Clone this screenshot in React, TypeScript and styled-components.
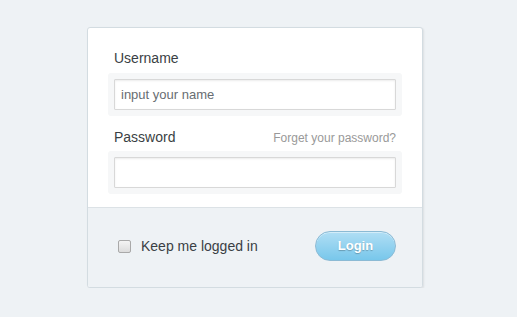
import React from 'react'
import styled, { createGlobalStyle } from 'styled-components'

const GlobalStyle = createGlobalStyle`
  html, body {
    margin: 0;
    padding: 0;
    background: #eef2f5;
    font-family: "Liberation Sans", Arial, sans-serif;
  }
`

function App() {
  return (
    <Page>
      <GlobalStyle />
      <Card>
        <Body>
          <LabelRow>
            <Label>Username</Label>
          </LabelRow>
          <InputWell>
            <Input type="text" placeholder="input your name" />
          </InputWell>
          <LabelRow $spaced>
            <Label>Password</Label>
            <Forgot href="#">Forget your password?</Forgot>
          </LabelRow>
          <InputWell>
            <Input type="password" />
          </InputWell>
        </Body>
        <Footer>
          <Remember>
            <Check type="checkbox" />
            Keep me logged in
          </Remember>
          <LoginButton>Login</LoginButton>
        </Footer>
      </Card>
    </Page>
  )
}

const Page = styled.div`
  padding: 27px 0 0 87px;
`

const Card = styled.div`
  width: 334px;
  background: #fff;
  border: 1px solid #d3dce1;
  border-radius: 3px;
  box-shadow: 1px 1px 2px rgb(0 0 0 / 8%);
  overflow: hidden;
`

const Body = styled.div`
  padding: 20px 20px 13px;
`

const LabelRow = styled.div<{ $spaced?: boolean }>`
  display: flex;
  justify-content: space-between;
  align-items: baseline;
  height: 20px;
  line-height: 20px;
  padding: 0 6px;
  margin: ${(p) => (p.$spaced ? '11px 0 4px' : '0 0 5px')};
`

const Label = styled.span`
  font-size: 14px;
  color: #3a3f44;
`

const Forgot = styled.a`
  font-size: 12px;
  color: #999;
  text-decoration: none;
`

const InputWell = styled.div`
  padding: 6px;
  background: #f6f7f8;
  border-radius: 3px;
`

const Input = styled.input`
  display: block;
  box-sizing: border-box;
  width: 100%;
  height: 31px;
  margin: 0;
  padding: 0 6px;
  border: 1px solid #d8d8d8;
  border-radius: 1px;
  background: #fff;
  box-shadow: inset 0 1px 2px rgb(0 0 0 / 8%);
  font-family: inherit;
  font-size: 13px;
  color: #333;
  outline: none;

  &::placeholder {
    color: #686d72;
  }
`

const Footer = styled.div`
  display: flex;
  align-items: center;
  justify-content: space-between;
  box-sizing: border-box;
  height: 80px;
  padding: 0 26px 4px 30px;
  background: #eef2f5;
  border-top: 1px solid #dce2e6;
`

const Remember = styled.label`
  display: flex;
  align-items: center;
  gap: 10px;
  font-size: 14px;
  color: #3a3f44;
`

const Check = styled.input`
  appearance: none;
  box-sizing: border-box;
  width: 13px;
  height: 13px;
  margin: 2px 0 0;
  border: 1px solid #a9a9a9;
  border-radius: 2px;
  background: linear-gradient(#f4f4f4, #dcdcdc);
`

const LoginButton = styled.button`
  box-sizing: border-box;
  width: 81px;
  height: 30px;
  border: 1px solid #8bbad4;
  border-radius: 15px;
  background: linear-gradient(#b0def4, #78c7eb);
  box-shadow: inset 0 1px 0 rgb(255 255 255 / 45%);
  color: #fff;
  font-family: inherit;
  font-size: 13px;
  font-weight: bold;
  text-shadow: 0 1px 1px rgb(0 0 0 / 25%);
  cursor: pointer;
`

export default App
